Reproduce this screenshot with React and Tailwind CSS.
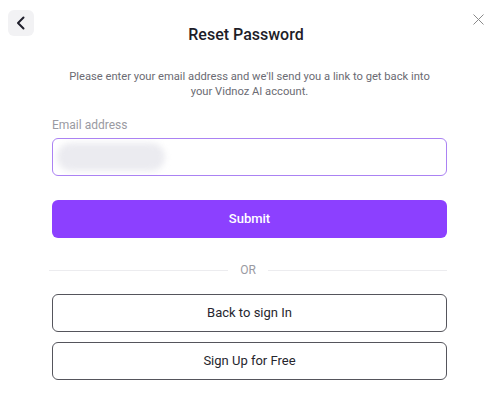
export default function App() {
  return (
    <div className="w-[498px] h-[415px] bg-white overflow-hidden" style={{ fontFamily: 'Roboto, "Liberation Sans", sans-serif' }}>
      {/* header */}
      <div className="grid grid-cols-[1fr_auto_1fr] items-start pt-[10px] pl-[8px] pr-[14px]">
        <button className="w-[26px] h-[26px] rounded-md bg-[#f2f2f4] flex items-center justify-center justify-self-start">
          <svg width="10" height="14" viewBox="0 0 10 14" fill="none">
            <path d="M7.5 1.5L2 7l5.5 5.5" stroke="#1f1f2b" strokeWidth="2" strokeLinecap="round" strokeLinejoin="round" />
          </svg>
        </button>
        <h1 className="mt-[14px] text-[16px] leading-[22px] font-medium text-[#1d1d28]">Reset Password</h1>
        <button className="justify-self-end mt-[4px]">
          <svg width="11" height="11" viewBox="0 0 11 11" fill="none">
            <path d="M0.5 0.5l10 10M10.5 0.5l-10 10" stroke="#8a8a8a" strokeWidth="1" />
          </svg>
        </button>
      </div>

      <div className="pl-[52px] pr-[51px]">
        <p className="mt-[23px] px-[15px] text-center text-[11.2px] leading-[15px] text-[#6b6b73]">
          Please enter your email address and we'll send you a link to get back into your Vidnoz AI account.
        </p>

        <label className="block mt-[18px] text-[12px] leading-[16px] text-[#9a9aa2]">Email address</label>
        <div className="mt-[5px] h-[38px] rounded-md border-[1.5px] border-[#ab82f3] flex items-center pl-[4px] overflow-hidden">
          <div className="w-[108px] h-[28px] rounded-full bg-[#ebebf0] blur-[3px]" />
        </div>

        <button className="mt-[24px] w-full h-[38px] rounded-md bg-[#8c40ff] text-white text-[13px] font-medium">Submit</button>

        <div className="mt-[25px] flex items-center gap-[12px] -ml-[3px]">
          <div className="flex-1 h-px bg-[#ececef]" />
          <span className="text-[12px] leading-[14px] text-[#9a9aa2]">OR</span>
          <div className="flex-1 h-px bg-[#ececef]" />
        </div>

        <button className="mt-[17px] w-full h-[38px] rounded-md border border-[#55555c] text-[13px] text-[#26262e]">Back to sign In</button>
        <button className="mt-[10px] w-full h-[38px] rounded-md border border-[#55555c] text-[13px] text-[#26262e]">Sign Up for Free</button>
      </div>
    </div>
  );
}
